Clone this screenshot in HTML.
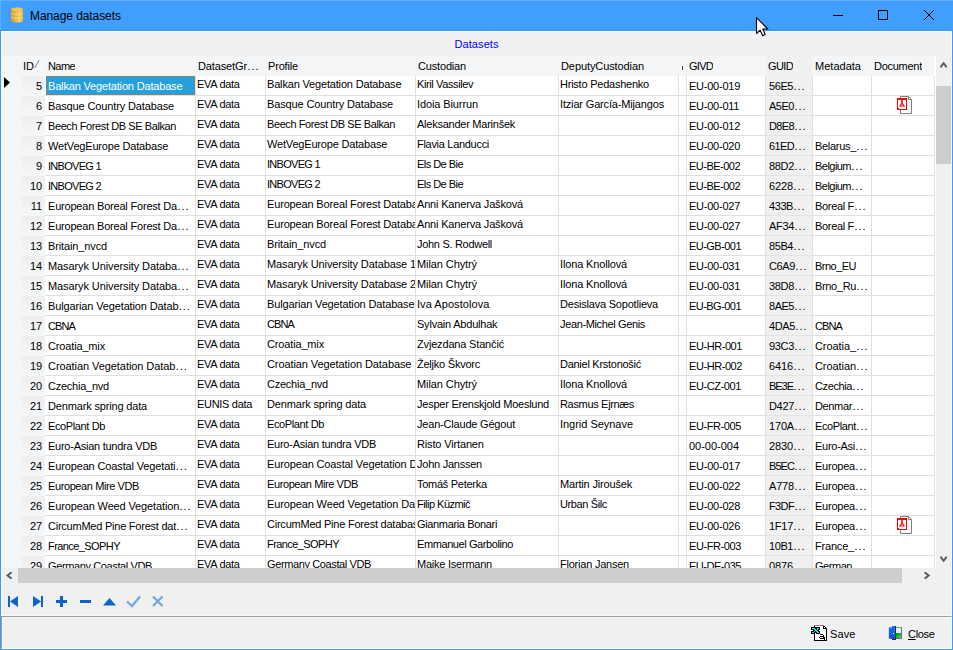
<!DOCTYPE html><html><head><meta charset="utf-8"><title>Manage datasets</title><style>
html,body{margin:0;padding:0}
body{width:953px;height:650px;position:relative;overflow:hidden;background:#f0f0f0;font-family:"Liberation Sans",sans-serif;font-size:11px;letter-spacing:-0.1px;color:#000}
.abs{position:absolute}
#title{left:0;top:0;width:953px;height:31px;background:#409eff}
#title .txt{position:absolute;left:30px;top:1px;line-height:31px;font-size:12px;letter-spacing:-0.08px}
#bl{left:0;top:31px;width:1px;height:619px;background:#3a9aff}
#br{left:952px;top:31px;width:1px;height:619px;background:#3a9aff}
#bb{left:0;top:649px;width:953px;height:1px;background:#3a9aff}
#lbl{left:1px;top:37px;width:951px;text-align:center;color:#0000ff;line-height:14px;letter-spacing:0.1px}
#grid{left:2px;top:56px;width:934px;height:512px;overflow:hidden;background:#fff}
.hdr{position:absolute;left:0;top:0;width:932px;height:20px;background:#f4f5f7}
.d{letter-spacing:0.94px !important;margin-left:0.4px}
.hdr>span{position:absolute;top:0;line-height:20px;white-space:nowrap;overflow:hidden}
.row{position:absolute;left:-1px;width:934px;height:20px}
.c{position:absolute;top:0;height:19px;line-height:20px;white-space:nowrap;overflow:hidden;border-right:1px solid #e0e0e0;border-bottom:1px solid #e0e0e0;box-sizing:content-box}
i{font-style:normal}
.c i{position:relative;display:block}
.up i{top:-2px}
.ind{left:0;width:20px;background:#f5f6f7;border:0;height:20px}
.id{left:20px;width:21px;padding-right:3px;text-align:right;background:linear-gradient(#eeeeef,#f1f2f3 50%,#f5f6f7);border-right:0;border-bottom:1px solid #f5f6f7}
.nm{left:44px;width:147px;padding-left:3px}
.dg{left:195px;width:68px;padding-left:1px}
.pf{left:265px;width:148px;padding-left:1px}
.cu{left:415px;width:141px;padding-left:1px}
.dc{left:558px;width:118px;padding-left:1px}
.nn{left:678px;width:7px}
.gv{left:686px;width:76px;padding-left:2px}
.gu{left:765px;width:43px;padding-left:3px;background:#f0f0f0;border-bottom-color:#e4e4e4}
.md{left:812px;width:56px;padding-left:2px}
.dm{left:871px;width:62px}
.pdf{position:absolute;left:25px;top:0}
.sel i{background:#26a0da;color:#fff;outline:1px dotted #e8641b;outline-offset:-1px;margin-left:-2px;padding-left:2px;height:19px}
</style></head><body>
<div id="title" class="abs"><svg class="abs" style="left:10px;top:6px" width="15" height="18" viewBox="0 0 15 18"><defs><linearGradient id="g" x1="0" x2="1" y1="0" y2="0"><stop offset="0" stop-color="#cf9b2b"/><stop offset="0.35" stop-color="#e6b43f"/><stop offset="0.72" stop-color="#fbd464"/><stop offset="1" stop-color="#e0ae3a"/></linearGradient></defs><path d="M1 3.5C1 0.8 13 0.8 13 3.5V14.5C13 17.2 1 17.2 1 14.5Z" fill="url(#g)"/><path d="M1 7C3 9 11 9 13 7M1 11C3 13 11 13 13 11" fill="none" stroke="#f8e096" stroke-width="0.8"/><ellipse cx="7" cy="3.2" rx="5.6" ry="1.5" fill="#f2c452"/></svg><span class="txt">Manage datasets</span><div class="abs" style="left:0;top:0;width:953px;height:1px;background:#5caeff"></div><div class="abs" style="left:0;top:0;width:1px;height:30px;background:#5caeff"></div><div class="abs" style="left:0;top:30px;width:953px;height:1px;background:#3399ff"></div>
<svg class="abs" style="left:826px;top:4px" width="116" height="24" viewBox="0 0 116 24" fill="none" stroke="#000" stroke-width="1"><path d="M7 11.5H17"/><rect x="52.5" y="6.5" width="9" height="9"/><path d="M98 6L108 16M108 6L98 16"/></svg>
</div>
<div id="lbl" class="abs">Datasets</div>
<div id="grid" class="abs">
<div class="hdr"><div class="abs" style="left:764px;top:0;width:46px;height:20px;background:#f0f0f0"></div>
<span style="left:21px"><i style="letter-spacing:0.0px">ID</i></span>
<span style="left:46px"><i style="letter-spacing:-0.586px">Name</i></span>
<span style="left:196px"><i style="letter-spacing:-0.125px">DatasetGr<span class="d">...</span></i></span>
<span style="left:266px"><i style="letter-spacing:-0.168px">Profile</i></span>
<span style="left:416px"><i style="letter-spacing:-0.17px">Custodian</i></span>
<span style="left:559px"><i style="letter-spacing:-0.092px">DeputyCustodian</i></span>
<span style="left:687px"><i style="letter-spacing:-0.723px">GIVD</i></span>
<span style="left:766px"><i style="letter-spacing:-0.625px">GUID</i></span>
<span style="left:813px"><i style="letter-spacing:0.017px">Metadata</i></span>
<span style="left:872px"><i style="letter-spacing:-0.267px">Document</i></span>
<svg class="abs" style="left:31px;top:3px" width="12" height="11" viewBox="0 0 12 11"><path d="M1.5 9.5L6.5 0.5" stroke="#808080" fill="none"/><path d="M6.5 0.5L10.5 9.5H1.5" stroke="#fff" fill="none"/></svg>
<div class="abs" style="left:680px;top:10px;width:1px;height:4px;background:#444"></div>
</div>
<div class="row" style="top:20px"><div class="c ind"><svg class="abs" style="left:3px;top:1px" width="7" height="11" viewBox="0 0 7 11"><path d="M0 0L6 5.5L0 11Z" fill="#000"/></svg></div><div class="c id"><i style="letter-spacing:-0.118px">5</i></div><div class="c nm sel"><i style="letter-spacing:-0.171px">Balkan Vegetation Database</i></div><div class="c dg up"><i style="letter-spacing:-0.31px">EVA data</i></div><div class="c pf up"><i style="letter-spacing:-0.171px">Balkan Vegetation Database</i></div><div class="c cu up"><i style="letter-spacing:-0.382px">Kiril Vassilev</i></div><div class="c dc up"><i style="letter-spacing:-0.232px">Hristo Pedashenko</i></div><div class="c nn"></div><div class="c gv"><i style="letter-spacing:-0.244px">EU-00-019</i></div><div class="c gu"><i style="letter-spacing:-0.422px">56E5<span class="d">...</span></i></div><div class="c md"><i></i></div><div class="c dm"></div></div>
<div class="row" style="top:40px"><div class="c ind"></div><div class="c id"><i style="letter-spacing:-0.118px">6</i></div><div class="c nm"><i style="letter-spacing:-0.131px">Basque Country Database</i></div><div class="c dg up"><i style="letter-spacing:-0.31px">EVA data</i></div><div class="c pf up"><i style="letter-spacing:-0.131px">Basque Country Database</i></div><div class="c cu up"><i style="letter-spacing:-0.105px">Idoia Biurrun</i></div><div class="c dc up"><i style="letter-spacing:-0.163px">Itziar García-Mijangos</i></div><div class="c nn"></div><div class="c gv"><i style="letter-spacing:-0.244px">EU-00-011</i></div><div class="c gu"><i style="letter-spacing:-0.477px">A5E0<span class="d">...</span></i></div><div class="c md"><i></i></div><div class="c dm"><svg class="pdf" width="16" height="19" viewBox="0 0 16 19"><path d="M3.5 0.5H11.5L14.5 3.5V17.5H3.5Z" fill="#fff" stroke="#808080"/><path d="M11.5 0.5V3.5H14.5" fill="none" stroke="#808080"/><rect x="0" y="2" width="10" height="12" fill="#f00"/><rect x="1" y="4" width="8" height="8" fill="#fff"/><path d="M4.2 4h1.6v3.2l2.4 3.4H1.8l2.4-3.4z" fill="#f00"/><path d="M3.6 9.6L5 8.2L6.4 9.6z" fill="#fff"/><rect x="2" y="12" width="7" height="1" fill="#fff"/></svg></div></div>
<div class="row" style="top:60px"><div class="c ind"></div><div class="c id"><i style="letter-spacing:-0.118px">7</i></div><div class="c nm"><i style="letter-spacing:-0.407px">Beech Forest DB SE Balkan</i></div><div class="c dg up"><i style="letter-spacing:-0.31px">EVA data</i></div><div class="c pf up"><i style="letter-spacing:-0.407px">Beech Forest DB SE Balkan</i></div><div class="c cu up"><i style="letter-spacing:-0.248px">Aleksander Marinšek</i></div><div class="c dc up"><i></i></div><div class="c nn"></div><div class="c gv"><i style="letter-spacing:-0.244px">EU-00-012</i></div><div class="c gu"><i style="letter-spacing:-0.629px">D8E8<span class="d">...</span></i></div><div class="c md"><i></i></div><div class="c dm"></div></div>
<div class="row" style="top:80px"><div class="c ind"></div><div class="c id"><i style="letter-spacing:-0.118px">8</i></div><div class="c nm"><i style="letter-spacing:-0.178px">WetVegEurope Database</i></div><div class="c dg up"><i style="letter-spacing:-0.31px">EVA data</i></div><div class="c pf up"><i style="letter-spacing:-0.178px">WetVegEurope Database</i></div><div class="c cu up"><i style="letter-spacing:-0.295px">Flavia Landucci</i></div><div class="c dc up"><i></i></div><div class="c nn"></div><div class="c gv"><i style="letter-spacing:-0.244px">EU-00-020</i></div><div class="c gu"><i style="letter-spacing:-0.629px">61ED<span class="d">...</span></i></div><div class="c md"><i style="letter-spacing:-0.302px">Belarus_<span class="d">...</span></i></div><div class="c dm"></div></div>
<div class="row" style="top:100px"><div class="c ind"></div><div class="c id"><i style="letter-spacing:-0.118px">9</i></div><div class="c nm"><i style="letter-spacing:-0.7px">INBOVEG 1</i></div><div class="c dg up"><i style="letter-spacing:-0.31px">EVA data</i></div><div class="c pf up"><i style="letter-spacing:-0.7px">INBOVEG 1</i></div><div class="c cu up"><i style="letter-spacing:-0.535px">Els De Bie</i></div><div class="c dc up"><i></i></div><div class="c nn"></div><div class="c gv"><i style="letter-spacing:-0.515px">EU-BE-002</i></div><div class="c gu"><i style="letter-spacing:-0.324px">88D2<span class="d">...</span></i></div><div class="c md"><i style="letter-spacing:-0.534px">Belgium<span class="d">...</span></i></div><div class="c dm"></div></div>
<div class="row" style="top:120px"><div class="c ind"></div><div class="c id"><i style="letter-spacing:-0.118px">10</i></div><div class="c nm"><i style="letter-spacing:-0.7px">INBOVEG 2</i></div><div class="c dg up"><i style="letter-spacing:-0.31px">EVA data</i></div><div class="c pf up"><i style="letter-spacing:-0.7px">INBOVEG 2</i></div><div class="c cu up"><i style="letter-spacing:-0.535px">Els De Bie</i></div><div class="c dc up"><i></i></div><div class="c nn"></div><div class="c gv"><i style="letter-spacing:-0.515px">EU-BE-002</i></div><div class="c gu"><i style="letter-spacing:-0.118px">6228<span class="d">...</span></i></div><div class="c md"><i style="letter-spacing:-0.534px">Belgium<span class="d">...</span></i></div><div class="c dm"></div></div>
<div class="row" style="top:140px"><div class="c ind"></div><div class="c id"><i style="letter-spacing:-0.118px">11</i></div><div class="c nm"><i style="letter-spacing:-0.196px">European Boreal Forest Da<span class="d">...</span></i></div><div class="c dg up"><i style="letter-spacing:-0.31px">EVA data</i></div><div class="c pf up"><i style="letter-spacing:-0.159px">European Boreal Forest Database</i></div><div class="c cu up"><i style="letter-spacing:-0.173px">Anni Kanerva Jašková</i></div><div class="c dc up"><i></i></div><div class="c nn"></div><div class="c gv"><i style="letter-spacing:-0.244px">EU-00-027</i></div><div class="c gu"><i style="letter-spacing:-0.422px">433B<span class="d">...</span></i></div><div class="c md"><i style="letter-spacing:-0.322px">Boreal F<span class="d">...</span></i></div><div class="c dm"></div></div>
<div class="row" style="top:160px"><div class="c ind"></div><div class="c id"><i style="letter-spacing:-0.118px">12</i></div><div class="c nm"><i style="letter-spacing:-0.196px">European Boreal Forest Da<span class="d">...</span></i></div><div class="c dg up"><i style="letter-spacing:-0.31px">EVA data</i></div><div class="c pf up"><i style="letter-spacing:-0.155px">European Boreal Forest Database 2</i></div><div class="c cu up"><i style="letter-spacing:-0.173px">Anni Kanerva Jašková</i></div><div class="c dc up"><i></i></div><div class="c nn"></div><div class="c gv"><i style="letter-spacing:-0.244px">EU-00-027</i></div><div class="c gu"><i style="letter-spacing:-0.323px">AF34<span class="d">...</span></i></div><div class="c md"><i style="letter-spacing:-0.322px">Boreal F<span class="d">...</span></i></div><div class="c dm"></div></div>
<div class="row" style="top:180px"><div class="c ind"></div><div class="c id"><i style="letter-spacing:-0.118px">13</i></div><div class="c nm"><i style="letter-spacing:-0.128px">Britain_nvcd</i></div><div class="c dg up"><i style="letter-spacing:-0.31px">EVA data</i></div><div class="c pf up"><i style="letter-spacing:-0.128px">Britain_nvcd</i></div><div class="c cu up"><i style="letter-spacing:-0.299px">John S. Rodwell</i></div><div class="c dc up"><i></i></div><div class="c nn"></div><div class="c gv"><i style="letter-spacing:-0.539px">EU-GB-001</i></div><div class="c gu"><i style="letter-spacing:-0.422px">85B4<span class="d">...</span></i></div><div class="c md"><i></i></div><div class="c dm"></div></div>
<div class="row" style="top:200px"><div class="c ind"></div><div class="c id"><i style="letter-spacing:-0.118px">14</i></div><div class="c nm"><i style="letter-spacing:-0.097px">Masaryk University Databa<span class="d">...</span></i></div><div class="c dg up"><i style="letter-spacing:-0.31px">EVA data</i></div><div class="c pf up"><i style="letter-spacing:-0.111px">Masaryk University Database 1</i></div><div class="c cu up"><i style="letter-spacing:-0.094px">Milan Chytrý</i></div><div class="c dc up"><i style="letter-spacing:-0.15px">Ilona Knollová</i></div><div class="c nn"></div><div class="c gv"><i style="letter-spacing:-0.244px">EU-00-031</i></div><div class="c gu"><i style="letter-spacing:-0.379px">C6A9<span class="d">...</span></i></div><div class="c md"><i style="letter-spacing:-0.519px">Brno_EU</i></div><div class="c dm"></div></div>
<div class="row" style="top:220px"><div class="c ind"></div><div class="c id"><i style="letter-spacing:-0.118px">15</i></div><div class="c nm"><i style="letter-spacing:-0.097px">Masaryk University Databa<span class="d">...</span></i></div><div class="c dg up"><i style="letter-spacing:-0.31px">EVA data</i></div><div class="c pf up"><i style="letter-spacing:-0.111px">Masaryk University Database 2</i></div><div class="c cu up"><i style="letter-spacing:-0.094px">Milan Chytrý</i></div><div class="c dc up"><i style="letter-spacing:-0.15px">Ilona Knollová</i></div><div class="c nn"></div><div class="c gv"><i style="letter-spacing:-0.244px">EU-00-031</i></div><div class="c gu"><i style="letter-spacing:-0.324px">38D8<span class="d">...</span></i></div><div class="c md"><i style="letter-spacing:-0.345px">Brno_Ru<span class="d">...</span></i></div><div class="c dm"></div></div>
<div class="row" style="top:240px"><div class="c ind"></div><div class="c id"><i style="letter-spacing:-0.118px">16</i></div><div class="c nm"><i style="letter-spacing:-0.136px">Bulgarian Vegetation Datab<span class="d">...</span></i></div><div class="c dg up"><i style="letter-spacing:-0.31px">EVA data</i></div><div class="c pf up"><i style="letter-spacing:-0.147px">Bulgarian Vegetation Database</i></div><div class="c cu up"><i style="letter-spacing:0.06px">Iva Apostolova</i></div><div class="c dc up"><i style="letter-spacing:-0.205px">Desislava Sopotlieva</i></div><div class="c nn"></div><div class="c gv"><i style="letter-spacing:-0.539px">EU-BG-001</i></div><div class="c gu"><i style="letter-spacing:-0.477px">8AE5<span class="d">...</span></i></div><div class="c md"><i></i></div><div class="c dm"></div></div>
<div class="row" style="top:260px"><div class="c ind"></div><div class="c id"><i style="letter-spacing:-0.118px">17</i></div><div class="c nm"><i style="letter-spacing:-0.89px">CBNA</i></div><div class="c dg up"><i style="letter-spacing:-0.31px">EVA data</i></div><div class="c pf up"><i style="letter-spacing:-0.89px">CBNA</i></div><div class="c cu up"><i style="letter-spacing:-0.212px">Sylvain Abdulhak</i></div><div class="c dc up"><i style="letter-spacing:-0.358px">Jean-Michel Genis</i></div><div class="c nn"></div><div class="c gv"><i></i></div><div class="c gu"><i style="letter-spacing:-0.379px">4DA5<span class="d">...</span></i></div><div class="c md"><i style="letter-spacing:-0.89px">CBNA</i></div><div class="c dm"></div></div>
<div class="row" style="top:280px"><div class="c ind"></div><div class="c id"><i style="letter-spacing:-0.118px">18</i></div><div class="c nm"><i style="letter-spacing:-0.153px">Croatia_mix</i></div><div class="c dg up"><i style="letter-spacing:-0.31px">EVA data</i></div><div class="c pf up"><i style="letter-spacing:-0.153px">Croatia_mix</i></div><div class="c cu up"><i style="letter-spacing:-0.169px">Zvjezdana Stančić</i></div><div class="c dc up"><i></i></div><div class="c nn"></div><div class="c gv"><i style="letter-spacing:-0.428px">EU-HR-001</i></div><div class="c gu"><i style="letter-spacing:-0.324px">93C3<span class="d">...</span></i></div><div class="c md"><i style="letter-spacing:-0.072px">Croatia_<span class="d">...</span></i></div><div class="c dm"></div></div>
<div class="row" style="top:300px"><div class="c ind"></div><div class="c id"><i style="letter-spacing:-0.118px">19</i></div><div class="c nm"><i style="letter-spacing:-0.066px">Croatian Vegetation Datab<span class="d">...</span></i></div><div class="c dg up"><i style="letter-spacing:-0.31px">EVA data</i></div><div class="c pf up"><i style="letter-spacing:-0.085px">Croatian Vegetation Database</i></div><div class="c cu up"><i style="letter-spacing:-0.232px">Željko Škvorc</i></div><div class="c dc up"><i style="letter-spacing:-0.27px">Daniel Krstonošić</i></div><div class="c nn"></div><div class="c gv"><i style="letter-spacing:-0.428px">EU-HR-002</i></div><div class="c gu"><i style="letter-spacing:-0.118px">6416<span class="d">...</span></i></div><div class="c md"><i style="letter-spacing:-0.072px">Croatian<span class="d">...</span></i></div><div class="c dm"></div></div>
<div class="row" style="top:320px"><div class="c ind"></div><div class="c id"><i style="letter-spacing:-0.118px">20</i></div><div class="c nm"><i style="letter-spacing:-0.236px">Czechia_nvd</i></div><div class="c dg up"><i style="letter-spacing:-0.31px">EVA data</i></div><div class="c pf up"><i style="letter-spacing:-0.236px">Czechia_nvd</i></div><div class="c cu up"><i style="letter-spacing:-0.094px">Milan Chytrý</i></div><div class="c dc up"><i style="letter-spacing:-0.15px">Ilona Knollová</i></div><div class="c nn"></div><div class="c gv"><i style="letter-spacing:-0.403px">EU-CZ-001</i></div><div class="c gu"><i style="letter-spacing:-1.032px">BE3E<span class="d">...</span></i></div><div class="c md"><i style="letter-spacing:-0.392px">Czechia<span class="d">...</span></i></div><div class="c dm"></div></div>
<div class="row" style="top:340px"><div class="c ind"></div><div class="c id"><i style="letter-spacing:-0.118px">21</i></div><div class="c nm"><i style="letter-spacing:-0.163px">Denmark spring data</i></div><div class="c dg up"><i style="letter-spacing:-0.308px">EUNIS data</i></div><div class="c pf up"><i style="letter-spacing:-0.163px">Denmark spring data</i></div><div class="c cu up"><i style="letter-spacing:-0.238px">Jesper Erenskjold Moeslund</i></div><div class="c dc up"><i style="letter-spacing:-0.326px">Rasmus Ejrnæs</i></div><div class="c nn"></div><div class="c gv"><i></i></div><div class="c gu"><i style="letter-spacing:-0.324px">D427<span class="d">...</span></i></div><div class="c md"><i style="letter-spacing:-0.354px">Denmar<span class="d">...</span></i></div><div class="c dm"></div></div>
<div class="row" style="top:360px"><div class="c ind"></div><div class="c id"><i style="letter-spacing:-0.118px">22</i></div><div class="c nm"><i style="letter-spacing:-0.377px">EcoPlant Db</i></div><div class="c dg up"><i style="letter-spacing:-0.31px">EVA data</i></div><div class="c pf up"><i style="letter-spacing:-0.377px">EcoPlant Db</i></div><div class="c cu up"><i style="letter-spacing:-0.195px">Jean-Claude Gégout</i></div><div class="c dc up"><i style="letter-spacing:-0.027px">Ingrid Seynave</i></div><div class="c nn"></div><div class="c gv"><i style="letter-spacing:-0.403px">EU-FR-005</i></div><div class="c gu"><i style="letter-spacing:-0.172px">170A<span class="d">...</span></i></div><div class="c md"><i style="letter-spacing:-0.378px">EcoPlant<span class="d">...</span></i></div><div class="c dm"></div></div>
<div class="row" style="top:380px"><div class="c ind"></div><div class="c id"><i style="letter-spacing:-0.118px">23</i></div><div class="c nm"><i style="letter-spacing:-0.254px">Euro-Asian tundra VDB</i></div><div class="c dg up"><i style="letter-spacing:-0.31px">EVA data</i></div><div class="c pf up"><i style="letter-spacing:-0.254px">Euro-Asian tundra VDB</i></div><div class="c cu up"><i style="letter-spacing:-0.149px">Risto Virtanen</i></div><div class="c dc up"><i></i></div><div class="c nn"></div><div class="c gv"><i style="letter-spacing:-0.017px">00-00-004</i></div><div class="c gu"><i style="letter-spacing:-0.118px">2830<span class="d">...</span></i></div><div class="c md"><i style="letter-spacing:-0.272px">Euro-Asi<span class="d">...</span></i></div><div class="c dm"></div></div>
<div class="row" style="top:400px"><div class="c ind"></div><div class="c id"><i style="letter-spacing:-0.118px">24</i></div><div class="c nm"><i style="letter-spacing:-0.139px">European Coastal Vegetati<span class="d">...</span></i></div><div class="c dg up"><i style="letter-spacing:-0.31px">EVA data</i></div><div class="c pf up"><i style="letter-spacing:-0.135px">European Coastal Vegetation Database</i></div><div class="c cu up"><i style="letter-spacing:-0.24px">John Janssen</i></div><div class="c dc up"><i></i></div><div class="c nn"></div><div class="c gv"><i style="letter-spacing:-0.244px">EU-00-017</i></div><div class="c gu"><i style="letter-spacing:-0.934px">B5EC<span class="d">...</span></i></div><div class="c md"><i style="letter-spacing:-0.227px">Europea<span class="d">...</span></i></div><div class="c dm"></div></div>
<div class="row" style="top:420px"><div class="c ind"></div><div class="c id"><i style="letter-spacing:-0.118px">25</i></div><div class="c nm"><i style="letter-spacing:-0.401px">European Mire VDB</i></div><div class="c dg up"><i style="letter-spacing:-0.31px">EVA data</i></div><div class="c pf up"><i style="letter-spacing:-0.401px">European Mire VDB</i></div><div class="c cu up"><i style="letter-spacing:-0.276px">Tomáš Peterka</i></div><div class="c dc up"><i style="letter-spacing:-0.172px">Martin Jiroušek</i></div><div class="c nn"></div><div class="c gv"><i style="letter-spacing:-0.244px">EU-00-022</i></div><div class="c gu"><i style="letter-spacing:-0.172px">A778<span class="d">...</span></i></div><div class="c md"><i style="letter-spacing:-0.227px">Europea<span class="d">...</span></i></div><div class="c dm"></div></div>
<div class="row" style="top:440px"><div class="c ind"></div><div class="c id"><i style="letter-spacing:-0.118px">26</i></div><div class="c nm"><i style="letter-spacing:-0.131px">European Weed Vegetation<span class="d">...</span></i></div><div class="c dg up"><i style="letter-spacing:-0.31px">EVA data</i></div><div class="c pf up"><i style="letter-spacing:-0.13px">European Weed Vegetation Database</i></div><div class="c cu up"><i style="letter-spacing:-0.524px">Filip Küzmič</i></div><div class="c dc up"><i style="letter-spacing:-0.374px">Urban Šilc</i></div><div class="c nn"></div><div class="c gv"><i style="letter-spacing:-0.244px">EU-00-028</i></div><div class="c gu"><i style="letter-spacing:-0.625px">F3DF<span class="d">...</span></i></div><div class="c md"><i style="letter-spacing:-0.227px">Europea<span class="d">...</span></i></div><div class="c dm"></div></div>
<div class="row" style="top:460px"><div class="c ind"></div><div class="c id"><i style="letter-spacing:-0.118px">27</i></div><div class="c nm"><i style="letter-spacing:-0.235px">CircumMed Pine Forest dat<span class="d">...</span></i></div><div class="c dg up"><i style="letter-spacing:-0.31px">EVA data</i></div><div class="c pf up"><i style="letter-spacing:-0.228px">CircumMed Pine Forest database</i></div><div class="c cu up"><i style="letter-spacing:-0.35px">Gianmaria Bonari</i></div><div class="c dc up"><i></i></div><div class="c nn"></div><div class="c gv"><i style="letter-spacing:-0.244px">EU-00-026</i></div><div class="c gu"><i style="letter-spacing:-0.268px">1F17<span class="d">...</span></i></div><div class="c md"><i style="letter-spacing:-0.227px">Europea<span class="d">...</span></i></div><div class="c dm"><svg class="pdf" width="16" height="19" viewBox="0 0 16 19"><path d="M3.5 0.5H11.5L14.5 3.5V17.5H3.5Z" fill="#fff" stroke="#808080"/><path d="M11.5 0.5V3.5H14.5" fill="none" stroke="#808080"/><rect x="0" y="2" width="10" height="12" fill="#f00"/><rect x="1" y="4" width="8" height="8" fill="#fff"/><path d="M4.2 4h1.6v3.2l2.4 3.4H1.8l2.4-3.4z" fill="#f00"/><path d="M3.6 9.6L5 8.2L6.4 9.6z" fill="#fff"/><rect x="2" y="12" width="7" height="1" fill="#fff"/></svg></div></div>
<div class="row" style="top:480px"><div class="c ind"></div><div class="c id"><i style="letter-spacing:-0.118px">28</i></div><div class="c nm"><i style="letter-spacing:-0.572px">France_SOPHY</i></div><div class="c dg up"><i style="letter-spacing:-0.31px">EVA data</i></div><div class="c pf up"><i style="letter-spacing:-0.572px">France_SOPHY</i></div><div class="c cu up"><i style="letter-spacing:-0.407px">Emmanuel Garbolino</i></div><div class="c dc up"><i></i></div><div class="c nn"></div><div class="c gv"><i style="letter-spacing:-0.403px">EU-FR-003</i></div><div class="c gu"><i style="letter-spacing:-0.422px">10B1<span class="d">...</span></i></div><div class="c md"><i style="letter-spacing:-0.193px">France_<span class="d">...</span></i></div><div class="c dm"></div></div>
<div class="row" style="top:500px"><div class="c ind"></div><div class="c id"><i style="letter-spacing:-0.118px">29</i></div><div class="c nm"><i style="letter-spacing:-0.382px">Germany Coastal VDB</i></div><div class="c dg up"><i style="letter-spacing:-0.31px">EVA data</i></div><div class="c pf up"><i style="letter-spacing:-0.382px">Germany Coastal VDB</i></div><div class="c cu up"><i style="letter-spacing:-0.232px">Maike Isermann</i></div><div class="c dc up"><i style="letter-spacing:-0.225px">Florian Jansen</i></div><div class="c nn"></div><div class="c gv"><i style="letter-spacing:-0.471px">EU-DE-035</i></div><div class="c gu"><i style="letter-spacing:-0.118px">0876<span class="d">...</span></i></div><div class="c md"><i style="letter-spacing:-0.456px">German<span class="d">...</span></i></div><div class="c dm"></div></div>
</div>
<div class="abs" style="left:936px;top:56px;width:15px;height:512px;background:#f0f0f0"><div class="abs" style="left:0;top:30px;width:15px;height:78px;background:#cdcdcd"></div></div>
<div class="abs" style="left:2px;top:568px;width:934px;height:15px;background:#f0f0f0"><div class="abs" style="left:16px;top:0;width:884px;height:15px;background:#cdcdcd"></div></div>
<svg class="abs" style="left:0;top:0" width="953" height="650" viewBox="0 0 953 650"><g fill="#555"><polygon points="943.6,61.8 947.3,66.6 946.0,68.1 943.6,64.8 941.2,68.1 939.9,66.6"/><polygon points="943.6,562.2 947.3,557.4 946.0,555.9 943.6,559.2 941.2,555.9 939.9,557.4"/><polygon points="6.0,575.5 10.8,579.2 12.3,577.9 9.0,575.5 12.3,573.1 10.8,571.8"/><polygon points="930.2,575.5 925.4,579.2 923.9,577.9 927.2,575.5 923.9,573.1 925.4,571.8"/></g></svg>
<svg class="abs" style="left:0;top:590px" width="180" height="24" viewBox="0 0 180 24"><g fill="#0a63cd"><rect x="8" y="6" width="2" height="11"/><path d="M18 6V17L10 11.5Z"/><path d="M33 6V17L41 11.5Z"/><rect x="41" y="6" width="2" height="11"/><rect x="56" y="10" width="11" height="3"/><rect x="60" y="6" width="3" height="11"/><rect x="80" y="10" width="11" height="3"/><path d="M103 15.5H116L109.5 8Z"/></g><g fill="none" stroke="#78a8e2" stroke-width="2.3"><path d="M127 11.5L132 16L140 6.5"/><path d="M153 6.5L162.5 16M162.5 6.5L153 16"/></g></svg>
<div class="abs" style="left:1px;top:31px;width:951px;height:585px;box-sizing:border-box;border:1px solid #fcf8f1"></div><div class="abs" style="left:1px;top:616px;width:951px;height:33px;box-sizing:border-box;border-top:1px solid #a0a0a0;border-left:1px solid #a0a0a0;border-bottom:1px solid #fff;border-right:1px solid #fff"><div class="abs" style="left:0;top:0;width:948px;height:30px;border-top:1px solid #f7f7f7;border-left:1px solid #f7f7f7"></div></div>
<svg class="abs" style="left:811px;top:625px" width="17" height="17" viewBox="0 0 17 17" shape-rendering="crispEdges"><g fill="#fff"><rect x="4" y="1" width="8" height="1"/><rect x="4" y="2" width="8" height="1"/><rect x="13" y="2" width="1" height="1"/><rect x="4" y="3" width="8" height="1"/><rect x="4" y="4" width="11" height="1"/><rect x="4" y="5" width="11" height="1"/><rect x="4" y="6" width="11" height="1"/><rect x="4" y="7" width="11" height="1"/><rect x="4" y="8" width="11" height="1"/><rect x="4" y="9" width="5" height="1"/><rect x="12" y="9" width="3" height="1"/><rect x="4" y="10" width="8" height="1"/><rect x="13" y="10" width="2" height="1"/><rect x="4" y="11" width="5" height="1"/><rect x="13" y="11" width="2" height="1"/><rect x="4" y="12" width="4" height="1"/><rect x="9" y="12" width="3" height="1"/><rect x="14" y="12" width="1" height="1"/><rect x="4" y="13" width="5" height="1"/><rect x="14" y="13" width="1" height="1"/><rect x="4" y="14" width="9" height="1"/><rect x="14" y="14" width="1" height="1"/></g><g fill="#808080"><rect x="3" y="0" width="10" height="1"/></g><g fill="#000"><rect x="3" y="1" width="1" height="1"/><rect x="12" y="1" width="2" height="1"/><rect x="3" y="2" width="1" height="1"/><rect x="12" y="2" width="1" height="1"/><rect x="14" y="2" width="1" height="1"/><rect x="3" y="3" width="1" height="1"/><rect x="12" y="3" width="4" height="1"/><rect x="3" y="4" width="1" height="1"/><rect x="15" y="4" width="1" height="1"/><rect x="3" y="5" width="1" height="1"/><rect x="15" y="5" width="1" height="1"/><rect x="3" y="6" width="1" height="1"/><rect x="15" y="6" width="1" height="1"/><rect x="3" y="7" width="1" height="1"/><rect x="15" y="7" width="1" height="1"/><rect x="3" y="8" width="1" height="1"/><rect x="15" y="8" width="1" height="1"/><rect x="3" y="9" width="1" height="1"/><rect x="9" y="9" width="3" height="1"/><rect x="15" y="9" width="1" height="1"/><rect x="3" y="10" width="1" height="1"/><rect x="12" y="10" width="1" height="1"/><rect x="15" y="10" width="1" height="1"/><rect x="3" y="11" width="1" height="1"/><rect x="9" y="11" width="4" height="1"/><rect x="15" y="11" width="1" height="1"/><rect x="3" y="12" width="1" height="1"/><rect x="8" y="12" width="1" height="1"/><rect x="12" y="12" width="2" height="1"/><rect x="15" y="12" width="1" height="1"/><rect x="3" y="13" width="1" height="1"/><rect x="9" y="13" width="5" height="1"/><rect x="15" y="13" width="1" height="1"/><rect x="3" y="14" width="1" height="1"/><rect x="13" y="14" width="1" height="1"/><rect x="15" y="14" width="1" height="1"/><rect x="3" y="15" width="13" height="1"/></g><g fill="#000"><rect x="0" y="2" width="9" height="1"/><rect x="0" y="3" width="1" height="1"/><rect x="4" y="3" width="2" height="1"/><rect x="8" y="3" width="1" height="1"/><rect x="0" y="4" width="3" height="1"/><rect x="5" y="4" width="1" height="1"/><rect x="7" y="4" width="2" height="1"/><rect x="2" y="5" width="2" height="1"/><rect x="6" y="5" width="2" height="1"/><rect x="0" y="6" width="3" height="1"/><rect x="4" y="6" width="1" height="1"/><rect x="7" y="6" width="2" height="1"/><rect x="0" y="7" width="1" height="1"/><rect x="3" y="7" width="3" height="1"/><rect x="8" y="7" width="1" height="1"/><rect x="0" y="8" width="4" height="1"/><rect x="5" y="8" width="4" height="1"/></g><g fill="#10e8ee"><rect x="1" y="3" width="3" height="1"/><rect x="6" y="3" width="2" height="1"/><rect x="3" y="4" width="2" height="1"/><rect x="6" y="4" width="1" height="1"/><rect x="4" y="5" width="2" height="1"/><rect x="3" y="6" width="1" height="1"/><rect x="5" y="6" width="2" height="1"/><rect x="1" y="7" width="2" height="1"/><rect x="6" y="7" width="2" height="1"/></g></svg>
<div class="abs" style="left:830px;top:624px;line-height:20px;letter-spacing:0.1px">Save</div>
<svg class="abs" style="left:888px;top:624px" width="16" height="18" viewBox="0 0 16 18"><defs><linearGradient id="dg" x1="0" x2="0" y1="0" y2="1"><stop offset="0" stop-color="#0b78f4"/><stop offset="1" stop-color="#0a50cc"/></linearGradient><linearGradient id="gg" x1="0" x2="1" y1="0" y2="1"><stop offset="0" stop-color="#008c00"/><stop offset="0.6" stop-color="#22c022"/><stop offset="1" stop-color="#6fe04a"/></linearGradient></defs><rect x="8" y="3" width="6" height="12" fill="#d9f4ff"/><rect x="8" y="9" width="5" height="5" fill="url(#gg)"/><path d="M8 3.5H14" stroke="#8a8a90"/><path d="M13.5 4V15M8 14.5H14" stroke="#6c62b0" fill="none"/><path d="M1 3.6L4 3.2V2H8V15.8H4V15L1 14.6Z" fill="url(#dg)"/><rect x="7" y="2" width="1" height="13.8" fill="#2c2c34"/><rect x="4" y="15" width="4" height="0.9" fill="#2c2c34"/><path d="M1.2 3.6V14.6" stroke="#5858a8" stroke-width="0.6"/><rect x="5" y="9" width="1.1" height="1.1" fill="#fff"/></svg>
<div class="abs" style="left:908px;top:624px;line-height:20px;letter-spacing:-0.3px"><u>C</u>lose</div>
<div id="bl" class="abs"></div><div id="br" class="abs"></div><div id="bb" class="abs"></div>
<svg class="abs" style="left:755px;top:15px" width="16" height="24" viewBox="0 0 16 24"><path d="M1.5 2.6V18.5L5.2 15.2L7.7 20.7L10.2 19.6L7.8 14H12.8Z" fill="#fff" stroke="#000" stroke-width="1.1" stroke-linejoin="round"/></svg>
</body></html>
